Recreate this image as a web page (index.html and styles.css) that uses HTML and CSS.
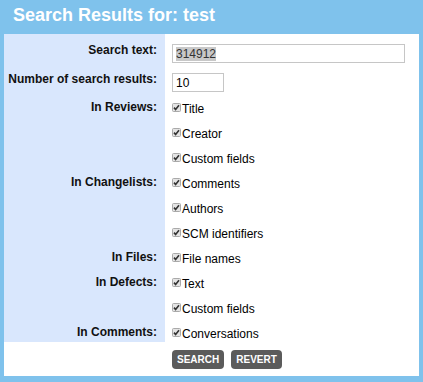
FILE: index.html
```html
<!DOCTYPE html>
<html lang="en">
<head>
  <meta charset="UTF-8">
  <title>Search Results</title>
  <link rel="stylesheet" href="styles.css">
</head>
<body>

<h1 class="title">Search Results for: test</h1>

<form class="panel" id="searchForm">
  <div class="grid">
    <div class="lbl first">Search text:</div>
    <div class="val first"><div class="field wide"><span class="sel">314912</span></div></div>

    <div class="lbl first">Number of search results:</div>
    <div class="val first"><div class="field narrow">10</div></div>

    <div class="lbl">In Reviews:</div>
    <div class="val"><label class="opt"><svg class="cb" viewBox="0 0 9 9"><rect x="0.5" y="0.5" width="8" height="8" rx="1"/><path d="M2 4.6 L3.6 6.4 L7 2.2"/></svg>Title</label></div>
    <div class="lbl"></div>
    <div class="val"><label class="opt"><svg class="cb" viewBox="0 0 9 9"><rect x="0.5" y="0.5" width="8" height="8" rx="1"/><path d="M2 4.6 L3.6 6.4 L7 2.2"/></svg>Creator</label></div>
    <div class="lbl"></div>
    <div class="val"><label class="opt"><svg class="cb" viewBox="0 0 9 9"><rect x="0.5" y="0.5" width="8" height="8" rx="1"/><path d="M2 4.6 L3.6 6.4 L7 2.2"/></svg>Custom fields</label></div>

    <div class="lbl">In Changelists:</div>
    <div class="val"><label class="opt"><svg class="cb" viewBox="0 0 9 9"><rect x="0.5" y="0.5" width="8" height="8" rx="1"/><path d="M2 4.6 L3.6 6.4 L7 2.2"/></svg>Comments</label></div>
    <div class="lbl"></div>
    <div class="val"><label class="opt"><svg class="cb" viewBox="0 0 9 9"><rect x="0.5" y="0.5" width="8" height="8" rx="1"/><path d="M2 4.6 L3.6 6.4 L7 2.2"/></svg>Authors</label></div>
    <div class="lbl"></div>
    <div class="val"><label class="opt"><svg class="cb" viewBox="0 0 9 9"><rect x="0.5" y="0.5" width="8" height="8" rx="1"/><path d="M2 4.6 L3.6 6.4 L7 2.2"/></svg>SCM identifiers</label></div>

    <div class="lbl">In Files:</div>
    <div class="val"><label class="opt"><svg class="cb" viewBox="0 0 9 9"><rect x="0.5" y="0.5" width="8" height="8" rx="1"/><path d="M2 4.6 L3.6 6.4 L7 2.2"/></svg>File names</label></div>

    <div class="lbl">In Defects:</div>
    <div class="val"><label class="opt"><svg class="cb" viewBox="0 0 9 9"><rect x="0.5" y="0.5" width="8" height="8" rx="1"/><path d="M2 4.6 L3.6 6.4 L7 2.2"/></svg>Text</label></div>
    <div class="lbl"></div>
    <div class="val"><label class="opt"><svg class="cb" viewBox="0 0 9 9"><rect x="0.5" y="0.5" width="8" height="8" rx="1"/><path d="M2 4.6 L3.6 6.4 L7 2.2"/></svg>Custom fields</label></div>

    <div class="lbl">In Comments:</div>
    <div class="val"><label class="opt"><svg class="cb" viewBox="0 0 9 9"><rect x="0.5" y="0.5" width="8" height="8" rx="1"/><path d="M2 4.6 L3.6 6.4 L7 2.2"/></svg>Conversations</label></div>
  </div>

  <div class="actions">
    <button type="button">SEARCH</button>
    <button type="button">REVERT</button>
  </div>
</form>

</body>
</html>
```

FILE: styles.css
```css
* {
  box-sizing: border-box;
}

body {
  margin: 0;
  background: #7fc2ec;
  font-family: "Liberation Sans", Arial, sans-serif;
  font-size: 12px;
  color: #111;
}

.title {
  margin: 0;
  padding: 4px 13px 8px;
  font-size: 18px;
  line-height: 22px;
  font-weight: bold;
  color: #fff;
}

.panel {
  margin: 0 4px;
  background: #fff;
  padding-bottom: 7px;
}

.grid {
  display: grid;
  grid-template-columns: 161px 1fr;
  grid-template-rows: 29px 29px;
  grid-auto-rows: 25px;
}

.lbl {
  background: #d9e7fd;
  text-align: right;
  font-weight: bold;
  line-height: 16px;
  padding: 7px 8px 0 0;
}

.val {
  line-height: 16px;
  padding: 9px 0 0 7px;
}

.lbl.first {
  padding-top: 8px;
}

.val.first {
  padding-top: 10px;
}

.field {
  height: 19px;
  border: 1px solid #c6c6c6;
  padding: 1px 3px 0;
  line-height: 16px;
  color: #000;
  background: #fff;
}

.field.wide {
  width: 233px;
}

.field.narrow {
  width: 52px;
}

.sel {
  background: #c8c8c8;
  color: #333;
}

.opt {
  display: flex;
  align-items: flex-start;
  color: #000;
}

.cb {
  width: 9px;
  height: 9px;
  margin: 2px 1px 0 0;
  flex-shrink: 0;
}

.cb rect {
  fill: #e4e4e4;
  stroke: #a9a9a9;
  stroke-width: 1;
}

.cb path {
  fill: none;
  stroke: #333;
  stroke-width: 1.6;
}

.actions {
  display: flex;
  gap: 7px;
  padding: 8px 0 0 168px;
}

button {
  height: 19px;
  padding: 0 5px;
  border: none;
  border-radius: 4px;
  background: #5b5b5b;
  color: #fff;
  font-family: "Liberation Sans", Arial, sans-serif;
  font-size: 10px;
  font-weight: bold;
  cursor: pointer;
}
```
